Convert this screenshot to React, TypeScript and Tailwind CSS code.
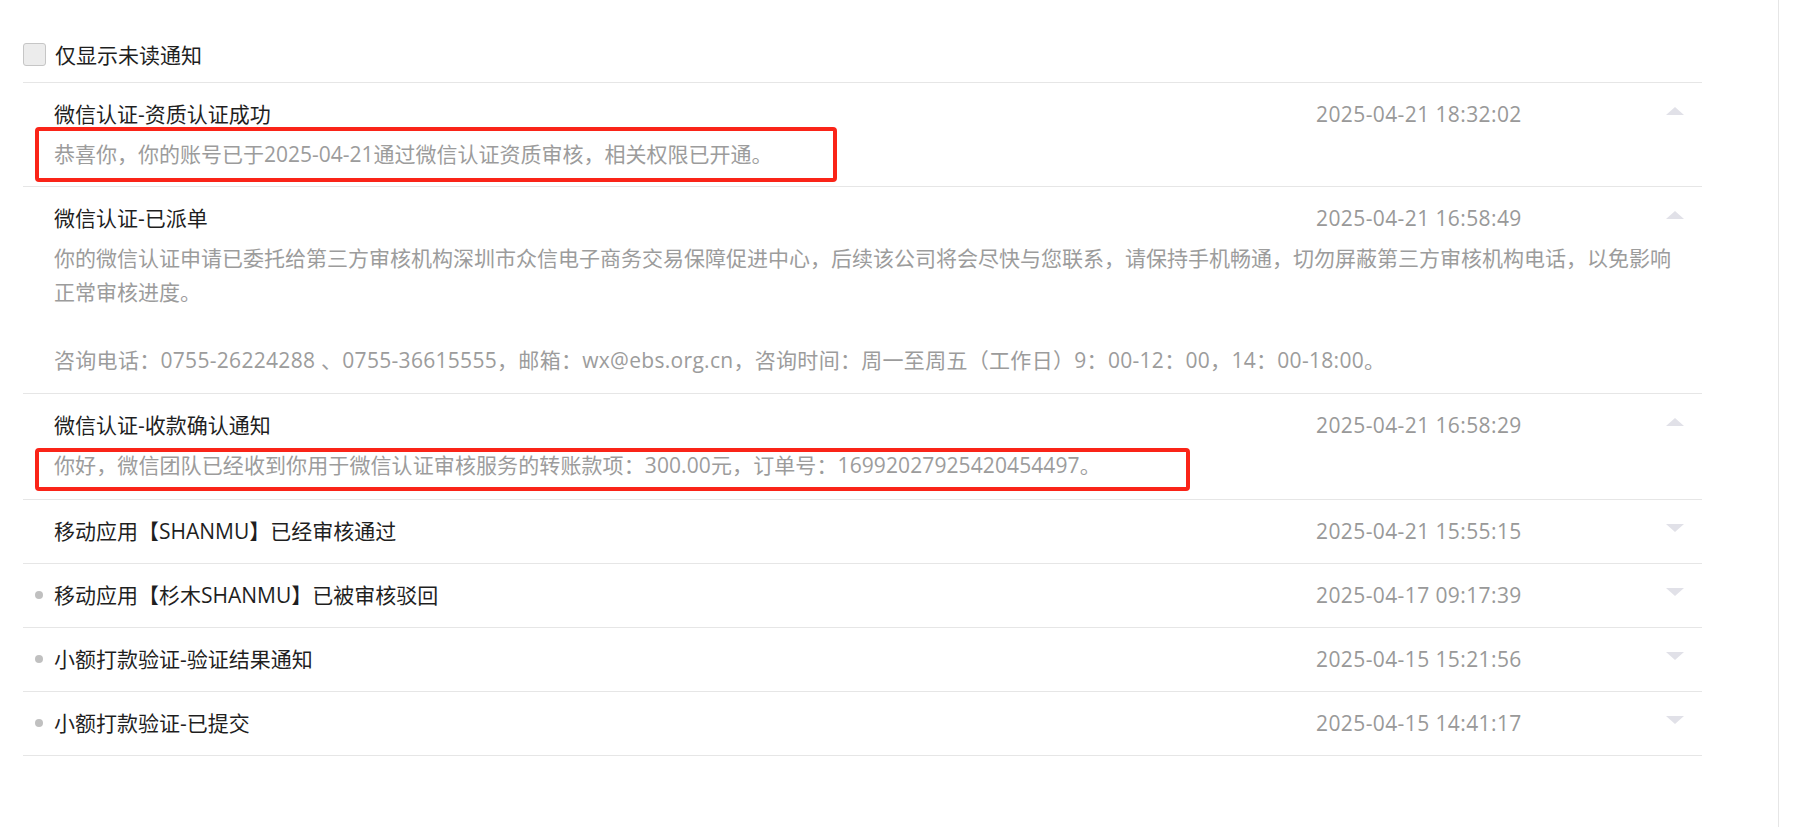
import React from "react";

type Item = {
  title: string;
  date: string;
  open: boolean;
  dot: boolean;
  pad: string;
  body?: React.ReactNode;
  box?: "a" | "b";
};

const items: Item[] = [
  {
    title: "微信认证-资质认证成功",
    date: "2025-04-21 18:32:02",
    open: true,
    dot: false,
    pad: "pb-[15px]",
    box: "a",
    body: <p>恭喜你，你的账号已于2025-04-21通过微信认证资质审核，相关权限已开通。</p>,
  },
  {
    title: "微信认证-已派单",
    date: "2025-04-21 16:58:49",
    open: true,
    dot: false,
    pad: "pb-[16px]",
    body: (
      <>
        <p>
          你的微信认证申请已委托给第三方审核机构深圳市众信电子商务交易保障促进中心，后续该公司将会尽快与您联系，请保持手机畅通，切勿屏蔽第三方审核机构电话，以免影响正常审核进度。
        </p>
        <p className="h-[34px]"></p>
        <p className="tracking-[0.3px]">
          咨询电话：0755-26224288 、0755-36615555，邮箱：wx@ebs.org.cn，咨询时间：周一至周五（工作日）9：00-12：00，14：00-18:00。
        </p>
      </>
    ),
  },
  {
    title: "微信认证-收款确认通知",
    date: "2025-04-21 16:58:29",
    open: true,
    dot: false,
    pad: "pb-[17px]",
    box: "b",
    body: (
      <p className="tracking-[0.1px]">
        你好，微信团队已经收到你用于微信认证审核服务的转账款项：300.00元，订单号：16992027925420454497。
      </p>
    ),
  },
  { title: "移动应用【SHANMU】已经审核通过", date: "2025-04-21 15:55:15", open: false, dot: false, pad: "pb-[15px]" },
  { title: "移动应用【杉木SHANMU】已被审核驳回", date: "2025-04-17 09:17:39", open: false, dot: true, pad: "pb-[15px]" },
  { title: "小额打款验证-验证结果通知", date: "2025-04-15 15:21:56", open: false, dot: true, pad: "pb-[15px]" },
  { title: "小额打款验证-已提交", date: "2025-04-15 14:41:17", open: false, dot: true, pad: "pb-[15px]" },
];

function Arrow({ up }: { up: boolean }) {
  return (
    <svg width="18" height="8" viewBox="0 0 18 8" className="block">
      {up ? (
        <polygon points="0,8 9,0 18,8" fill="#e1e1e8" />
      ) : (
        <polygon points="0,0 18,0 9,8" fill="#e1e1e8" />
      )}
    </svg>
  );
}

function Row({ item }: { item: Item }) {
  return (
    <div className={`relative border-b border-[#e6e6e6] pt-[14px] ${item.pad}`}>
      <div className="flex items-start">
        <div className="relative flex-1 pl-[31px] text-[#1f1f1f]">
          {item.dot && (
            <span className="absolute left-[12px] top-[13px] h-[8px] w-[8px] rounded-full bg-[#c0c0c0]"></span>
          )}
          {item.title}
        </div>
        <div className="w-[332px] text-[#999999] tracking-[0.4px]">{item.date}</div>
        <div className="flex w-[54px] justify-center pt-[10px]">
          <Arrow up={item.open} />
        </div>
      </div>
      {item.open && item.body && (
        <div className="mt-[6px] pl-[31px] pr-[23px] text-[#9c9c9c]">{item.body}</div>
      )}
      {item.box === "a" && (
        <div className="pointer-events-none absolute left-[12px] top-[44px] h-[55px] w-[802px] rounded-[4px] border-[4px] border-[#fa2418]"></div>
      )}
      {item.box === "b" && (
        <div className="pointer-events-none absolute left-[12px] top-[54px] h-[43px] w-[1155px] rounded-[4px] border-[4px] border-[#fa2418]"></div>
      )}
    </div>
  );
}

export default function App() {
  return (
    <div className="flex h-[827px] w-full overflow-hidden bg-white font-['Open_Sans','Noto_Sans_CJK_SC',sans-serif] text-[21px] leading-[34px]">
      <div className="h-full w-[1779px] shrink-0 border-r border-[#e6e6e6] pl-[23px] pr-[76px] pt-[43px]">
        <label className="flex h-[23px] items-center gap-[9px] text-[#1f1f1f]">
          <span className="block h-[23px] w-[23px] rounded-[3px] border border-[#c6c6c6] bg-[#ececec]"></span>
          <span>仅显示未读通知</span>
        </label>
        <div className="mt-[16px] border-t border-[#e6e6e6]">
          {items.map((it) => (
            <Row key={it.title} item={it} />
          ))}
        </div>
      </div>
      <div className="flex-1"></div>
    </div>
  );
}
